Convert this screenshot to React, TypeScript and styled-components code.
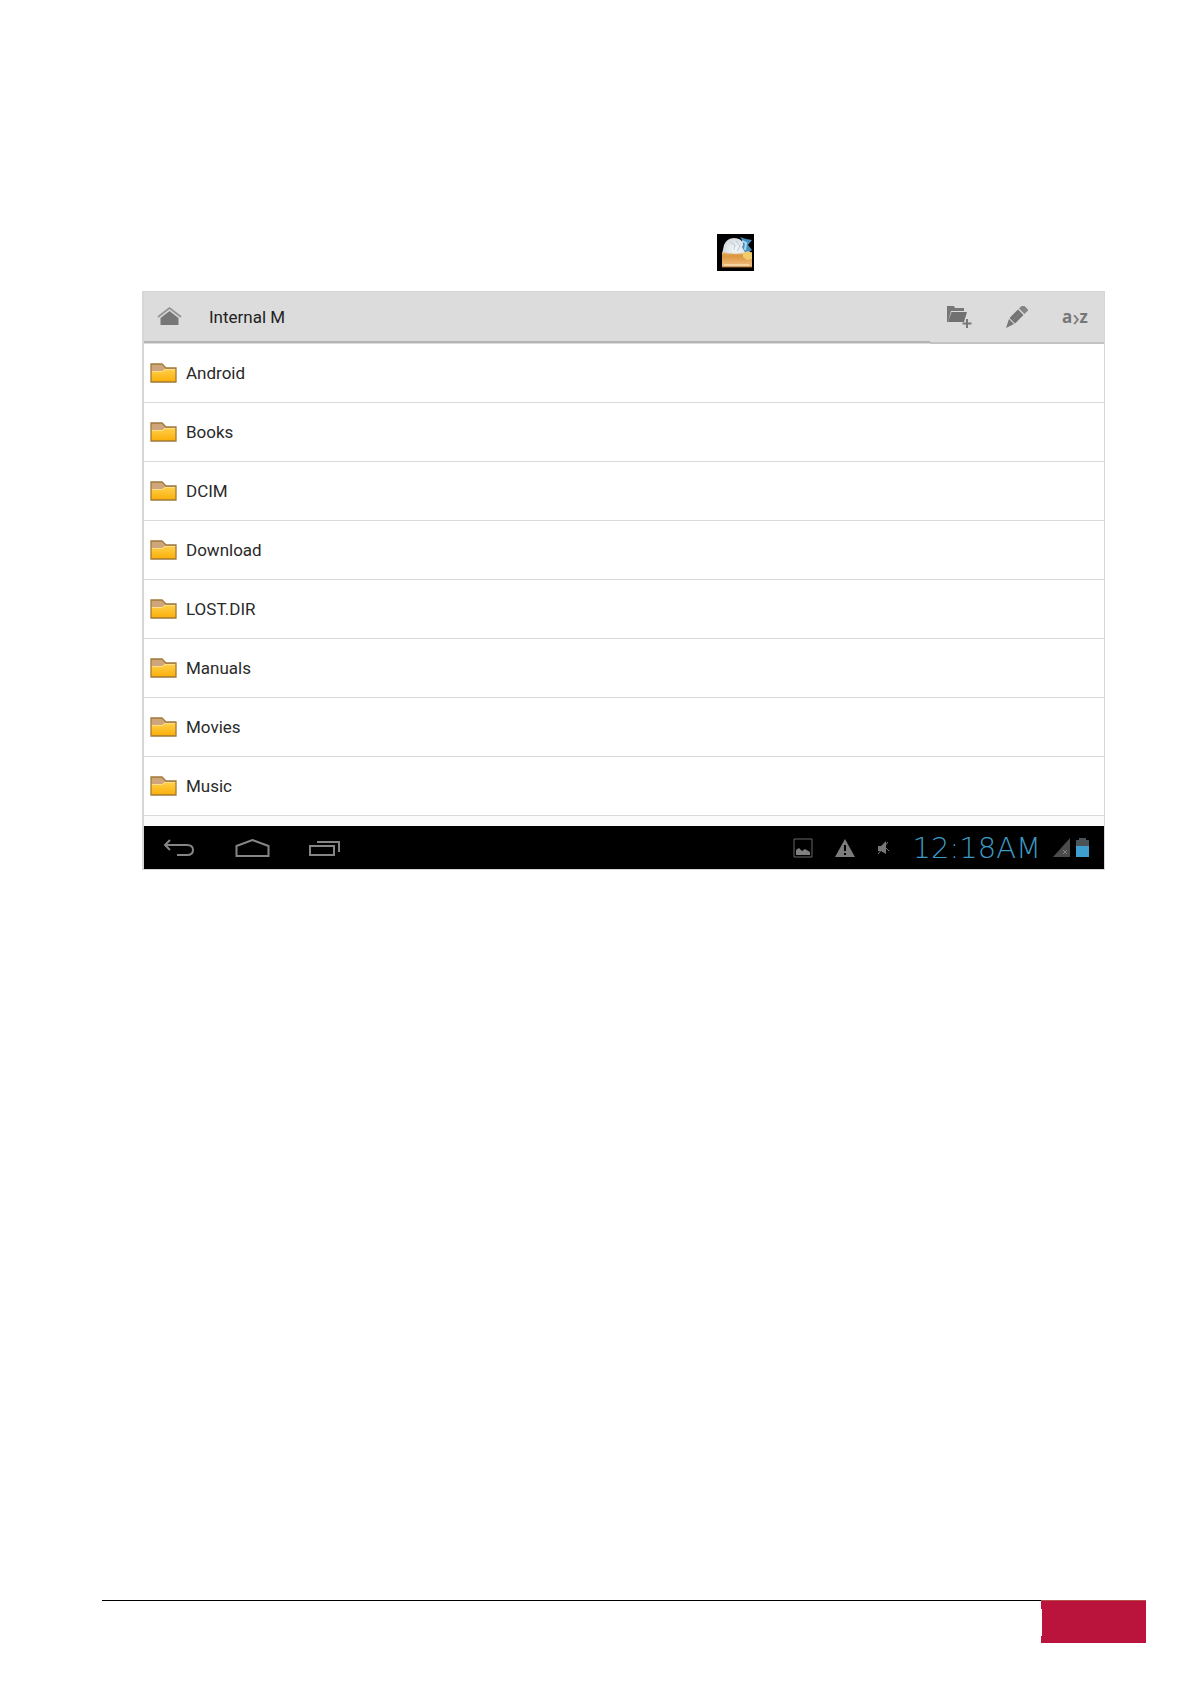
import React from "react";
import styled, { createGlobalStyle } from "styled-components";

const GlobalStyle = createGlobalStyle`
  * { box-sizing: border-box; }
  body { margin: 0; background: #fff; font-family: Roboto, "Liberation Sans", sans-serif; }
  button { border: 0; padding: 0; margin: 0; background: none; font: inherit; color: inherit; cursor: pointer; }
  svg { display: block; }
`;

const Page = styled.div`
  min-height: 100vh;
  display: flex;
  flex-direction: column;
`;

const Main = styled.main`
  flex: 1;
  padding: 234px 86px 0 142px;
`;

const AppIconLine = styled.div`
  display: flex;
  padding-left: 575px;
  margin-bottom: 20px;
`;

const Tablet = styled.section`
  border: 1px solid #d6d6d6;
  border-left-width: 2px;
`;

const Header = styled.header`
  display: flex;
  height: 52px;
  background: #dcdcdc;
  color: #222;
`;

const Crumbs = styled.div`
  flex: 1;
  display: flex;
  align-items: center;
  gap: 27px;
  padding-left: 13px;
  border-bottom: 2px solid #b4b4b4;
  margin-bottom: 1px;
`;

const Title = styled.h1`
  margin: 0;
  font-size: 17px;
  line-height: 20px;
  font-weight: 400;
`;

const Actions = styled.div`
  display: flex;
  align-items: center;
  border-bottom: 2px solid #c2c2c2;
`;

const Action = styled.button`
  width: 58px;
  height: 100%;
  display: flex;
  align-items: center;
  justify-content: center;
  color: #777;
`;

const SortAction = styled(Action)`
  font-family: "Open Sans", "Noto Sans", sans-serif;
  font-size: 17px;
  line-height: 20px;
  font-weight: 700;
`;

const Chevron = styled.span`
  font-size: 24px;
  font-weight: 400;
`;

const List = styled.ul`
  list-style: none;
  margin: 0;
  padding: 0;
`;

const Row = styled.li`
  height: 59px;
  border-bottom: 1px solid #dadada;
`;

const RowButton = styled.button`
  width: 100%;
  height: 100%;
  display: flex;
  align-items: center;
  gap: 9px;
  padding-left: 6px;
  font-size: 17px;
  line-height: 20px;
  color: #2a2a2a;
  text-align: left;
`;

const NextRow = styled.div`
  height: 10px;
  background: #fbfbfb;
`;

const NavBar = styled.nav`
  display: flex;
  justify-content: space-between;
  height: 43px;
  padding: 0 15px 0 18px;
  background: #000;
  color: #858585;
`;

const NavGroup = styled.div`
  display: flex;
  align-items: center;
  gap: 39px;
`;

const Status = styled.div`
  display: flex;
  align-items: center;
`;

const StatusIcons = styled.div`
  display: flex;
  align-items: center;
  gap: 22px;
  margin-right: 24px;
`;

const Clock = styled.time`
  margin-right: 12px;
  font-family: "DejaVu Sans Light", "DejaVu Sans", sans-serif;
  font-weight: 200;
  font-size: 29px;
  line-height: 32px;
  color: #3d9ac4;
`;

const Meters = styled.div`
  display: flex;
  align-items: center;
  gap: 6px;
`;

const Footer = styled.footer`
  display: flex;
  align-items: flex-start;
  margin: 0 45px 40px 102px;
`;

const Rule = styled.div`
  flex: 1;
  height: 1px;
  background: #000;
`;

const PageTab = styled.div`
  width: 105px;
  height: 43px;
  display: flex;
  align-items: center;
  background: #ba133c;
  border-top: 1px solid #b8504a;
`;

const Notch = styled.div`
  width: 1px;
  height: 27px;
  background: #fff;
`;

const AppIcon = () => (
  <svg width="37" height="37" viewBox="0 0 37 37" role="img" aria-label="Explorer">
    <defs>
      <linearGradient id="tray" x1="0" y1="0" x2="0" y2="1">
        <stop offset="0" stopColor="#e8bd82" />
        <stop offset="0.25" stopColor="#d9963f" />
        <stop offset="0.65" stopColor="#e9ab62" />
        <stop offset="1" stopColor="#f0c48c" />
      </linearGradient>
      <radialGradient id="globe" cx="0.45" cy="0.4" r="0.65">
        <stop offset="0" stopColor="#f6f8fa" />
        <stop offset="0.6" stopColor="#d6dde3" />
        <stop offset="1" stopColor="#a3adb6" />
      </radialGradient>
    </defs>
    <rect width="37" height="37" fill="#000" />
    <path d="M5 20 7 11Q10 4 17 4q8 0 10 7l8 9v12H5Z" fill="url(#globe)" />
    <path d="m13 8 5 3-1 5M19 7l4 5-3 5" fill="none" stroke="#b9c8d4" />
    <path d="m23 3 6 2 6 1-4 5 4 5-6 4-4-7 2-4Z" fill="#4b8fbe" />
    <path d="m25 7 4 2-1 7" fill="none" stroke="#a9daf1" strokeWidth="2" />
    <path d="M5 18q10 3 24 1l6-1v15H5Z" fill="url(#tray)" />
    <path d="m26 19 5-2 4 3v5l-5 1-4-3Z" fill="#f0cc6c" />
    <path d="M7 31h25" stroke="#f8dcb2" strokeWidth="1.500" />
    <path d="M5 33h30" stroke="#a96a2c" />
  </svg>
);

const HomeIcon = () => (
  <svg width="25" height="19" viewBox="0 0 25 19">
    <path d="M1 10 12.500 1 24 10" fill="none" stroke="#929292" strokeWidth="1.700" />
    <path d="m12.500 4 9 7v7h-18v-7Z" fill="#777" />
  </svg>
);

const FolderIcon = () => (
  <svg width="27" height="20" viewBox="0 0 27 20" aria-hidden="true">
    <defs>
      <linearGradient id="folder" x1="0" y1="0" x2="0" y2="1">
        <stop offset="0" stopColor="#ffd04a" />
        <stop offset="1" stopColor="#fbae08" />
      </linearGradient>
    </defs>
    <path d="M1 1h11l4 4h10v14H1Z" fill="#cfa67c" />
    <path d="M1 8h11l3-2h11v13H1Z" fill="url(#folder)" />
    <path d="M2 8.500h10.500L15 6.500h10" fill="none" stroke="#ffe08a" />
    <path d="M1 1h11l4 4h10v14H1Z" fill="none" stroke="#a07a38" strokeWidth="1.300" />
  </svg>
);

const NewFolderIcon = () => (
  <svg width="26" height="24" viewBox="0 0 26 24">
    <path d="M1 17V1h7l1 2h9v3H5L2 17Z" fill="#777" />
    <path d="M5.500 7H21l-3 10H2Z" fill="#717171" />
    <path d="M21 14v9M16.500 18.500h9" stroke="#777" strokeWidth="2" />
  </svg>
);

const PencilIcon = () => (
  <svg width="24" height="24" viewBox="0 0 24 24">
    <path d="M1 23 4 14l5 5Z" fill="#777" />
    <path d="m4.500 13 8.500-8.500 5.500 5.500-8.500 8.500Z" fill="#747474" />
    <path d="m14 3.500 2.500-2.500h3L23 4.500v1L19.500 9Z" fill="#858585" />
    <path d="m7 16 8.500-8.500" stroke="#858585" />
  </svg>
);

const BackIcon = () => (
  <svg width="34" height="18" viewBox="0 0 34 18" fill="none" stroke="currentColor" strokeWidth="2">
    <path d="M8 1 3 6l5 5M3 6h22q6 0 6 5t-6 5H15" />
  </svg>
);

const NavHomeIcon = () => (
  <svg width="35" height="18" viewBox="0 0 35 18" fill="none" stroke="currentColor" strokeWidth="2">
    <path d="M1.500 17V7L17.500 1l16 6v10Z" />
  </svg>
);

const RecentIcon = () => (
  <svg width="32" height="18" viewBox="0 0 32 18" fill="none" stroke="currentColor" strokeWidth="2">
    <path d="M1 7h24v9H1ZM8 3h22v10" />
  </svg>
);

const PictureIcon = () => (
  <svg width="20" height="20" viewBox="0 0 20 20">
    <path d="M1 1h18v18H1Z" fill="none" stroke="#666" />
    <path d="M3 17v-5l3-2 3 3 3-2 5 3v3Z" fill="#808080" />
  </svg>
);

const WarningIcon = () => (
  <svg width="20" height="18" viewBox="0 0 20 18">
    <path d="m10 0 10 18H0Z" fill="#7c7c7c" />
    <path d="M10 6v6M10 14v2" stroke="#000" strokeWidth="2" />
  </svg>
);

const MuteIcon = () => (
  <svg width="12" height="14" viewBox="0 0 12 14">
    <path d="M1 5h3l5-5v13L4 10H1Z" fill="#777" />
    <path d="m1 13 10-12M9 7l3 3" stroke="#777" />
  </svg>
);

const SignalIcon = () => (
  <svg width="17" height="19" viewBox="0 0 17 19">
    <path d="M17 0v19H0Z" fill="#4b4b4b" />
    <path d="m10 12 4 4M14 12l-4 4" stroke="#8a8178" />
  </svg>
);

const BatteryIcon = () => (
  <svg width="13" height="19" viewBox="0 0 13 19">
    <path d="M3 0h7v2h3v6H0V2h3Z" fill="#4a5358" />
    <path d="M0 8h13v11H0Z" fill="#3f9fd0" />
  </svg>
);

const folders = ["Android", "Books", "DCIM", "Download", "LOST.DIR", "Manuals", "Movies", "Music"];

export default function App() {
  return (
    <Page>
      <GlobalStyle />
      <Main>
        <AppIconLine><AppIcon /></AppIconLine>
        <Tablet>
          <Header>
            <Crumbs>
              <button aria-label="Home folder"><HomeIcon /></button>
              <Title>Internal M</Title>
            </Crumbs>
            <Actions>
              <Action aria-label="New folder"><NewFolderIcon /></Action>
              <Action aria-label="Edit"><PencilIcon /></Action>
              <SortAction>a<Chevron>›</Chevron>z</SortAction>
            </Actions>
          </Header>
          <List>
            {folders.map((name) => (
              <Row key={name}>
                <RowButton><FolderIcon />{name}</RowButton>
              </Row>
            ))}
          </List>
          <NextRow />
          <NavBar>
            <NavGroup>
              <button aria-label="Back"><BackIcon /></button>
              <button aria-label="Home"><NavHomeIcon /></button>
              <button aria-label="Recent apps"><RecentIcon /></button>
            </NavGroup>
            <Status>
              <StatusIcons>
                <PictureIcon />
                <WarningIcon />
                <MuteIcon />
              </StatusIcons>
              <Clock>12:18AM</Clock>
              <Meters>
                <SignalIcon />
                <BatteryIcon />
              </Meters>
            </Status>
          </NavBar>
        </Tablet>
      </Main>
      <Footer>
        <Rule />
        <PageTab><Notch /></PageTab>
      </Footer>
    </Page>
  );
}
